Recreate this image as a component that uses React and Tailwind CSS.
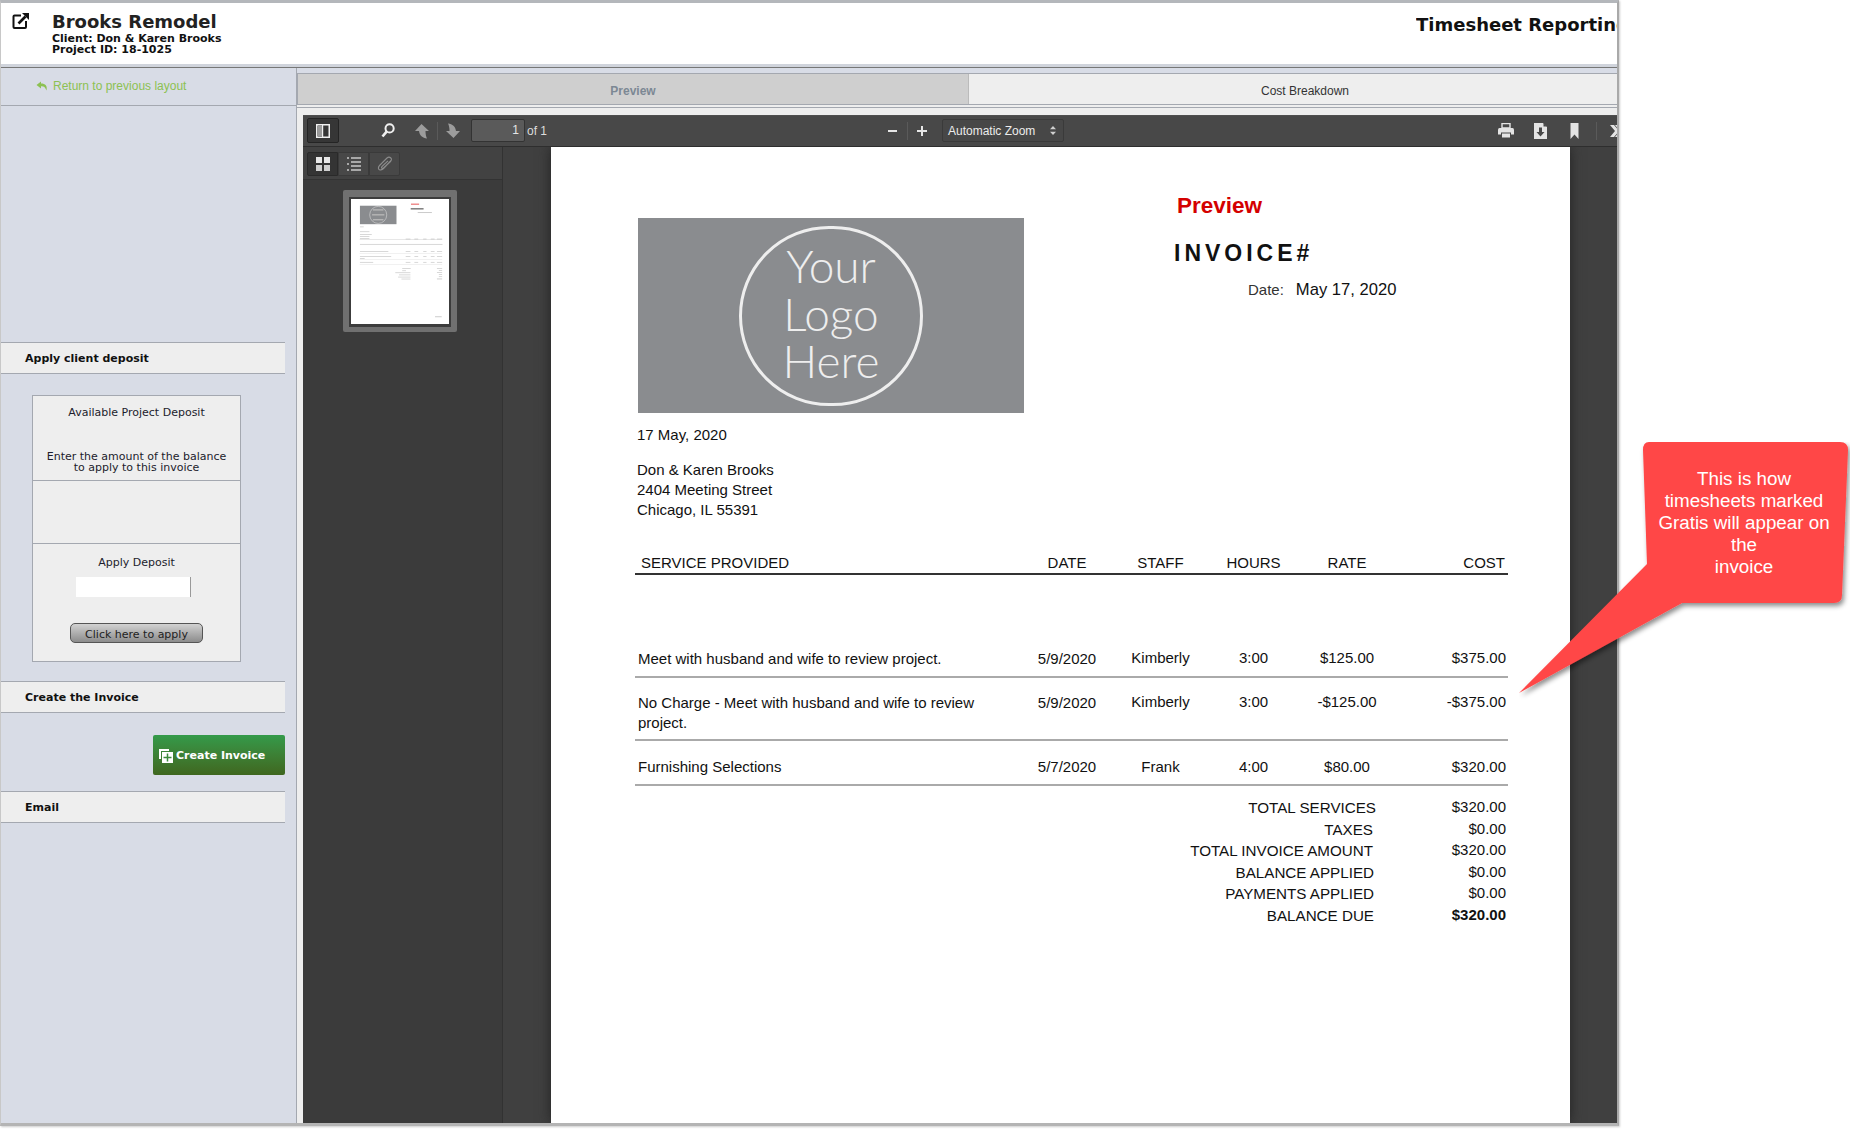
import React from "react";

const ui = { fontFamily: '"DejaVu Sans", Verdana, sans-serif' };
const arial = { fontFamily: '"Liberation Sans", Arial, sans-serif' };

function ExternalIcon() {
  return (
    <svg width="18" height="18" viewBox="0 0 18 18" className="mt-[9px] ml-[11px] shrink-0">
      <path d="M9 3.5H2.5Q1.5 3.5 1.5 4.5V15Q1.5 16 2.5 16H13Q14 16 14 15V9" fill="none" stroke="#111" strokeWidth="2" />
      <path d="M6.5 11.5L13.5 4.5" stroke="#111" strokeWidth="2.6" />
      <path d="M10 1H17V8Z" fill="#111" />
    </svg>
  );
}

function ReplyIcon() {
  return (
    <svg width="12" height="10" viewBox="0 0 12 10" className="shrink-0">
      <path d="M5 0.5L0.5 4L5 7.5V5.2C7.5 5 9 5.6 10.5 9.5C11.5 5 9.5 2.6 5 2.6Z" fill="#8cc152" />
    </svg>
  );
}

function Toolbar() {
  return (
    <div className="h-[32px] shrink-0 bg-[#484848] border-b border-[#2e2e2e] flex items-center overflow-hidden shadow-[inset_0_1px_0_#4f4f4f]">
      <div className="ml-[4px] w-[32px] h-[25px] flex items-center justify-center rounded-[2px] bg-[#363636] border border-[#242424] shrink-0">
        <svg width="14" height="14" viewBox="0 0 14 14">
          <rect x="0.75" y="0.75" width="12.5" height="12.5" fill="none" stroke="#f0f0f0" strokeWidth="1.5" />
          <rect x="2" y="2" width="4" height="10" fill="#9a9a9a" />
          <rect x="6" y="1" width="1.2" height="12" fill="#f0f0f0" />
        </svg>
      </div>
      <svg width="14" height="15" viewBox="0 0 14 15" className="ml-[42px] shrink-0">
        <circle cx="8.6" cy="5.4" r="4.1" fill="none" stroke="#f0f0f0" strokeWidth="2" />
        <path d="M5.6 8.6L1.5 13.5" stroke="#f0f0f0" strokeWidth="2.6" />
      </svg>
      <svg width="16" height="16" viewBox="0 0 16 16" className="ml-[19px] shrink-0">
        <path d="M7.5 1L15 8H11.5C11.5 11 12 13.5 13 15.5C8.5 15 5.5 12.5 5 8H1Z" fill="#9c9c9c" />
      </svg>
      <div className="ml-[7px] w-px h-[18px] bg-[#2f2f2f] border-r border-[#5a5a5a] shrink-0" />
      <svg width="16" height="16" viewBox="0 0 16 16" className="ml-[7px] shrink-0">
        <path d="M8.5 15L1 8H4.5C4.5 5 4 2.5 3 0.5C7.5 1 10.5 3.5 11 8H15Z" fill="#9c9c9c" />
      </svg>
      <div className="ml-[10px] w-[54px] h-[23px] bg-[#5a5a5a] border border-[#333] rounded-[2px] text-[#e6e6e6] text-[12px] leading-[21px] text-right pr-[5px] shrink-0" style={arial}>1</div>
      <span className="ml-[2px] text-[12px] text-[#dcdcdc] w-[29px] shrink-0" style={arial}>of 1</span>
      <div className="ml-[332px] w-[9px] h-[2px] bg-[#e6e6e6] shrink-0" />
      <div className="ml-[10px] w-px h-[18px] bg-[#2f2f2f] border-r border-[#5a5a5a] shrink-0" />
      <svg width="10" height="10" viewBox="0 0 10 10" className="ml-[9px] shrink-0">
        <path d="M5 0V10M0 5H10" stroke="#e6e6e6" strokeWidth="2" />
      </svg>
      <div className="ml-[15px] w-[122px] h-[23px] bg-[#474747] border border-[#3a3a3a] rounded-[2px] flex items-center justify-between pl-[5px] pr-[7px] text-[12px] text-[#ececec] shrink-0" style={arial}>
        <span>Automatic Zoom</span>
        <svg width="6" height="9" viewBox="0 0 6 9"><path d="M3 0L6 3.2H0ZM3 9L0 5.8H6Z" fill="#d0d0d0" /></svg>
      </div>
      <svg width="16" height="15" viewBox="0 0 16 15" className="ml-[434px] shrink-0">
        <path d="M4 0.5H12V5H4Z" fill="none" stroke="#e4e4e4" strokeWidth="1.4" />
        <path d="M1.5 5H14.5Q16 5 16 7V11.5H13V9.5H3V11.5H0V7Q0 5 1.5 5Z" fill="#e4e4e4" />
        <path d="M4 10.5H12V14.5H4Z" fill="#e4e4e4" />
      </svg>
      <svg width="13" height="16" viewBox="0 0 13 16" className="ml-[20px] shrink-0">
        <path d="M0 0H9L13 4V16H0Z" fill="#e4e4e4" />
        <path d="M9.5 0L13 3.5H9.5Z" fill="#484848" />
        <path d="M5 4.5H8V9H10.5L6.5 13.5L2.5 9H5Z" fill="#484848" />
      </svg>
      <svg width="9" height="16" viewBox="0 0 9 16" className="ml-[23px] shrink-0">
        <path d="M0.5 0H8.5V16L4.5 11.5L0.5 16Z" fill="#e4e4e4" />
      </svg>
      <div className="ml-[17px] w-px h-[18px] bg-[#2f2f2f] border-r border-[#5a5a5a] shrink-0" />
      <svg width="14" height="12" viewBox="0 0 14 12" className="ml-[13px] shrink-0">
        <path d="M0 0H4L9 6L4 12H0L5 6Z M5 0H9L14 6L9 12H5L10 6Z" fill="#e4e4e4" />
      </svg>
    </div>
  );
}

function Thumb() {
  const bars = [
    [87, 293, 40, 4], [87, 345, 100, 4], [87, 375, 125, 4], [87, 396, 100, 4], [87, 416, 100, 4],
    [87, 475, 872, 4], [87, 552, 300, 4], [87, 608, 330, 4], [87, 628, 50, 4], [87, 665, 140, 4],
    [533, 735, 90, 4], [533, 757, 40, 4], [460, 778, 160, 4], [500, 800, 120, 4], [490, 822, 130, 4], [525, 843, 95, 4],
    [900, 733, 55, 4], [920, 755, 35, 4], [900, 776, 55, 4], [920, 798, 35, 4], [920, 820, 35, 4], [900, 842, 55, 5],
  ];
  const cols = [[570, 50], [662, 40], [755, 35], [835, 40], [900, 55]];
  const ys = [475, 552, 608, 665];
  return (
    <div className="mt-[10px] ml-[40px] w-[114px] h-[142px] bg-[#707070] rounded-[2px] pt-[7px] pl-[6px]">
      <div className="w-[102px] h-[130px] bg-[#3c3c3c] p-[2px] pb-[3px]">
        <svg viewBox="0 0 1020 1320" className="w-[98px] h-[125px] bg-white block">
          <rect x="87" y="71" width="386" height="195" fill="#8a8c8f" />
          <circle cx="280" cy="168" r="90" fill="none" stroke="#dcdcdc" strokeWidth="6" />
          <rect x="225" y="108" width="110" height="14" fill="#b8b8b8" />
          <rect x="215" y="160" width="130" height="14" fill="#b8b8b8" />
          <rect x="225" y="212" width="110" height="14" fill="#b8b8b8" />
          <rect x="626" y="48" width="86" height="14" fill="#ee8080" />
          <rect x="623" y="98" width="136" height="12" fill="#555" />
          <rect x="697" y="140" width="150" height="8" fill="#bbb" />
          <rect x="84" y="428" width="872" height="5" fill="#ccc" />
          {bars.map((b, i) => <rect key={i} x={b[0]} y={b[1]} width={b[2]} height={b[3]} fill="#999" />)}
          {ys.slice(1).flatMap((y) => cols.map((c) => <rect key={y + "-" + c[0]} x={c[0]} y={y} width={c[1]} height="4" fill="#999" />))}
          {cols.map((c) => <rect key={c[0]} x={c[0]} y="420" width={c[1]} height="5" fill="#aaa" />)}
          <rect x="84" y="575" width="872" height="3" fill="#ccc" />
          <rect x="84" y="640" width="872" height="3" fill="#ccc" />
          <rect x="84" y="693" width="872" height="3" fill="#ccc" />
          <rect x="880" y="1240" width="70" height="8" fill="#bbb" />
        </svg>
      </div>
    </div>
  );
}

function PdfSidebar() {
  return (
    <div className="w-[200px] shrink-0 bg-[#3b3b3b] border-r border-[#323232]">
      <div className="h-[33px] bg-[#424242] border-b border-[#333] flex items-start pt-[5px] pl-[4px]">
        <div className="w-[31px] h-[24px] flex items-center justify-center bg-[#343434] border border-[#2a2a2a] rounded-l-[2px]">
          <svg width="14" height="14" viewBox="0 0 14 14">
            <rect width="6" height="6" fill="#e8e8e8" />
            <rect x="8" width="6" height="6" fill="#e8e8e8" />
            <rect y="8" width="6" height="6" fill="#cfcfcf" />
            <rect x="8" y="8" width="6" height="6" fill="#cfcfcf" />
          </svg>
        </div>
        <div className="w-[31px] h-[24px] flex items-center justify-center bg-[#484848] border border-[#3a3a3a]">
          <svg width="14" height="14" viewBox="0 0 14 14" fill="#a8a8a8">
            <rect y="0" width="2" height="2" /><rect x="4" y="0" width="10" height="2" />
            <rect x="4" y="4" width="10" height="2" /><rect y="6" width="2" height="2" />
            <rect x="4" y="8" width="10" height="2" /><rect y="12" width="2" height="2" /><rect x="4" y="12" width="10" height="2" />
          </svg>
        </div>
        <div className="w-[31px] h-[24px] flex items-center justify-center bg-[#484848] border border-[#3a3a3a] rounded-r-[2px]">
          <svg width="16" height="16" viewBox="0 0 16 16" fill="none">
            <path d="M14 4.5L6.5 12.5C5 14 2.5 14.5 1.8 13.2C1 12 1.5 10.5 3 9L10 2C11.2 1 12.8 1 13.8 2C14.8 3 14.5 4.5 13.5 5.5L6.5 12C5.8 12.6 4.8 12.5 4.6 11.8C4.4 11.2 4.8 10.6 5.5 10L11 4.8" stroke="#8c8c8c" strokeWidth="1.1" />
          </svg>
        </div>
      </div>
      <Thumb />
    </div>
  );
}

const COLS = "grid grid-cols-[385px_94px_93px_93px_94px_114px] ";

function Row({ desc, date, staff, hours, rate, cost, h, dt, ot }) {
  return (
    <div className={COLS + h + " border-b-2 border-[#aaa] leading-[20px]"}>
      <div className={"pl-[3px] pr-[30px] " + dt}>{desc}</div>
      <div className={"text-center " + dt}>{date}</div>
      <div className={"text-center " + ot}>{staff}</div>
      <div className={"text-center " + ot}>{hours}</div>
      <div className={"text-center " + ot}>{rate}</div>
      <div className={"text-right pr-[2px] " + ot}>{cost}</div>
    </div>
  );
}

function TotalRow({ label, value, pr, bold }) {
  return (
    <div className="flex justify-end h-[21.6px] leading-[20px]">
      <div className={"text-right text-[15.2px] " + pr}>{label}</div>
      <div className={"w-[90px] text-right pr-[2px] -mt-[1px] " + (bold ? "font-bold" : "")}>{value}</div>
    </div>
  );
}

function Invoice() {
  return (
    <div className="w-[1019px] h-full bg-white text-[15px] text-[#111] shrink-0 shadow-[0_0_12px_#222]" style={arial}>
      <div className="flex pl-[87px]">
        <div className="mt-[71px] w-[386px] h-[195px] bg-[#8a8c8f] flex items-center justify-center shrink-0">
          <div className="w-[184px] h-[180px] pb-[4px] rounded-full border-[3px] border-[#eee] flex flex-col items-center justify-center text-[#eeeeee] text-[46px] leading-[47.5px] font-light" style={{ fontFamily: "Lato, sans-serif" }}>
            <span>Your</span>
            <span>Logo</span>
            <span>Here</span>
          </div>
        </div>
        <div className="ml-[150px] pt-[45px]">
          <div className="ml-[3px] text-[22.5px] leading-[28px] font-bold text-[#d40000]">Preview</div>
          <div className="mt-[21px] text-[23px] leading-[24px] font-bold tracking-[4px] text-[#111]">INVOICE#</div>
          <div className="mt-[13px] ml-[74px] flex items-baseline gap-[12px] whitespace-nowrap">
            <span className="text-[15px] text-[#333]">Date:</span>
            <span className="text-[16.6px]">May 17, 2020</span>
          </div>
        </div>
      </div>
      <div className="ml-[86px] mt-[12px] leading-[20px]">17 May, 2020</div>
      <div className="ml-[86px] mt-[15px] leading-[20px]">
        <div>Don &amp; Karen Brooks</div>
        <div>2404 Meeting Street</div>
        <div>Chicago, IL 55391</div>
      </div>
      <div className="ml-[84px] mt-[33px] w-[873px]">
        <div className={COLS + "h-[20px] leading-[20px] border-b-2 border-[#333] box-content"}>
          <div className="pl-[6px]">SERVICE PROVIDED</div>
          <div className="text-center">DATE</div>
          <div className="text-center">STAFF</div>
          <div className="text-center">HOURS</div>
          <div className="text-center">RATE</div>
          <div className="text-right pr-[3px]">COST</div>
        </div>
        <div className="h-[72px]" />
        <Row desc="Meet with husband and wife to review project." date="5/9/2020" staff="Kimberly" hours="3:00" rate="$125.00" cost="$375.00" h="h-[31px]" dt="pt-[2px]" ot="pt-[1px]" />
        <Row desc="No Charge - Meet with husband and wife to review project." date="5/9/2020" staff="Kimberly" hours="3:00" rate="-$125.00" cost="-$375.00" h="h-[63px]" dt="pt-[15px]" ot="pt-[14px]" />
        <Row desc="Furnishing Selections" date="5/7/2020" staff="Frank" hours="4:00" rate="$80.00" cost="$320.00" h="h-[45px]" dt="pt-[16px]" ot="pt-[16px]" />
        <div className="mt-[12px]">
          <TotalRow label="TOTAL SERVICES" value="$320.00" pr="pr-[42px]" />
          <TotalRow label="TAXES" value="$0.00" pr="pr-[45px]" />
          <TotalRow label="TOTAL INVOICE AMOUNT" value="$320.00" pr="pr-[45px]" />
          <TotalRow label="BALANCE APPLIED" value="$0.00" pr="pr-[44px]" />
          <TotalRow label="PAYMENTS APPLIED" value="$0.00" pr="pr-[44px]" />
          <TotalRow label="BALANCE DUE" value="$320.00" pr="pr-[44px]" bold />
        </div>
      </div>
    </div>
  );
}

function SideHead({ children, className }) {
  return (
    <div className={"w-[284px] h-[32px] bg-[#eeeeee] border-y border-[#a4a8b0] pl-[24px] text-[11px] font-bold leading-[32px] text-[#111] " + className}>{children}</div>
  );
}

function Sidebar() {
  return (
    <div className="w-[296px] shrink-0 bg-[#d8dce6] border-r border-[#a4a8b0]" style={ui}>
      <div className="h-[38px] border-b border-[#a4a8b0] flex items-center pl-[35px] gap-[5px] pb-[1px]">
        <ReplyIcon />
        <span className="text-[12px] text-[#8cc152]" style={arial}>Return to previous layout</span>
      </div>
      <SideHead className="mt-[236px]">Apply client deposit</SideHead>
      <div className="ml-[31px] mt-[21px] w-[209px] h-[267px] bg-[#eeeeee] border border-[#a4a8b0] text-[11px] leading-[11px] text-center text-[#1c1c2c] flex flex-col">
        <div className="h-[85px] border-b border-[#a4a8b0] pt-[11px] shrink-0">
          <div>Available Project Deposit</div>
          <div className="mt-[33px]">Enter the amount of the balance<br />to apply to this invoice</div>
        </div>
        <div className="h-[63px] border-b border-[#a4a8b0] shrink-0" />
        <div className="pt-[13px] flex flex-col items-center">
          <div>Apply Deposit</div>
          <div className="mt-[9px] w-[115px] h-[20px] bg-white border-r border-[#999] -ml-[6px]" />
          <div className="mt-[26px] w-[133px] h-[20px] rounded-[5px] border border-[#555] bg-gradient-to-b from-[#d2d2d2] to-[#8c8c8c] leading-[21px] text-[#222]">Click here to apply</div>
        </div>
      </div>
      <SideHead className="mt-[19px]">Create the Invoice</SideHead>
      <div className="w-[284px] flex justify-end mt-[22px]">
        <div className="w-[132px] h-[40px] rounded-[2px] bg-gradient-to-b from-[#339a4a] to-[#3f671f] flex items-center pl-[6px] pt-[2px] gap-[3px] text-white text-[11px] font-bold">
          <svg width="14" height="14" viewBox="0 0 14 14" className="shrink-0">
            <path d="M0 0H10V2H2V10H0Z" fill="#fff" />
            <rect x="3" y="3" width="11" height="11" fill="#fff" />
            <path d="M8.5 4.5V12.5M4.5 8.5H12.5" stroke="#3a8a3a" strokeWidth="1.5" />
          </svg>
          <span>Create Invoice</span>
        </div>
      </div>
      <SideHead className="mt-[16px]">Email</SideHead>
    </div>
  );
}

function Callout() {
  return (
    <div className="absolute left-[1519px] top-[442px] w-[331px] h-[262px]">
      <svg width="331" height="262" viewBox="0 0 331 262" className="absolute inset-0">
        <defs>
          <filter id="cs" x="-10%" y="-10%" width="120%" height="120%">
            <feDropShadow dx="2" dy="3" stdDeviation="2.5" floodColor="#000" floodOpacity="0.45" />
          </filter>
        </defs>
        <path d="M130 0H321Q329 0 329 8L323 153Q323 161 315 161H163L0 251L128 122L124 8Q124 0 130 0Z" fill="#ff4747" filter="url(#cs)" />
      </svg>
      <div className="absolute left-[130px] top-[26px] w-[190px] text-center text-white text-[18.8px] leading-[22px]" style={arial}>
        This is how<br />timesheets marked<br />Gratis will appear on<br />the<br />invoice
      </div>
    </div>
  );
}

export default function App() {
  return (
    <div className="relative w-[1850px] h-[1130px] bg-white overflow-hidden">
      <div className="w-[1619px] h-[1126px] flex flex-col border-t-[3px] border-[#b4b7bb] border-l border-l-[#c8c8c8] border-r-2 border-r-[#a9a9a9] border-b-[3px] border-b-[#b4b4b4] shadow-[1px_1px_2px_#ccc] overflow-hidden">
        <div className="h-[64px] shrink-0 bg-white flex border-b-[3px] border-[#d0d4dc] relative">
          <ExternalIcon />
          <div className="ml-[22px] pt-[9px]" style={ui}>
            <div className="text-[18px] font-bold leading-[20px] text-[#222]">Brooks Remodel</div>
            <div className="text-[11px] font-bold leading-[11px] text-[#111] mt-[1px]">Client: Don &amp; Karen Brooks</div>
            <div className="text-[11px] font-bold leading-[11px] text-[#111]">Project ID: 18-1025</div>
          </div>
          <div className="ml-auto w-[201px] overflow-hidden whitespace-nowrap pt-[12px] text-[18px] font-bold leading-[20px] text-[#111]" style={ui}>Timesheet Reporting</div>
        </div>
        <div className="flex-1 min-h-0 flex border-t border-[#777]">
          <Sidebar />
          <div className="flex-1 min-w-0 flex flex-col bg-[#eeeeee]">
            <div className="h-[5px] shrink-0 bg-[#d8dce6]" />
            <div className="h-[32px] shrink-0 flex border-y border-[#a4a8b0] text-[12px]" style={arial}>
              <div className="w-[671px] bg-[#cfcfcf] border-l border-[#a4a8b0] flex items-center justify-center pt-[3px] font-bold text-[#7c8894]">Preview</div>
              <div className="flex-1 bg-[#eeeeee] border-l border-[#bbb] flex items-center justify-center pt-[3px] pl-[24px] text-[#333]">Cost Breakdown</div>
            </div>
            <div className="h-[3px] shrink-0 bg-[#eeeeee] border-b border-[#a4a8b0]" />
            <div className="h-[7px] shrink-0 bg-[#eeeeee]" />
            <div className="flex-1 min-h-0 ml-[6px] flex flex-col overflow-hidden">
              <Toolbar />
              <div className="flex-1 min-h-0 flex">
                <PdfSidebar />
                <div className="flex-1 min-w-0 bg-[#404040] pl-[48px] overflow-hidden">
                  <Invoice />
                </div>
              </div>
            </div>
          </div>
        </div>
      </div>
      <Callout />
    </div>
  );
}
